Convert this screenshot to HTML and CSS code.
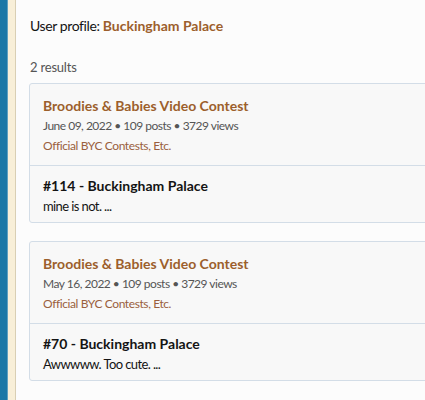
FILE: index.html
```html
<!DOCTYPE html>
<html lang="en">
<head>
    <meta charset="UTF-8">
    <meta name="viewport" content="width=device-width, initial-scale=1.0">
    <title>Search results</title>
    <link rel="stylesheet" href="styles.css">
</head>
<body>
    <div class="side-bar"></div>
    <div class="side-strip"></div>
    <div class="page">
        <h1 class="page-title">User profile: <a href="#">Buckingham Palace</a></h1>
        <p class="result-count">2 results</p>

        <div class="result">
            <div class="result-head">
                <a class="thread-title" href="#">Broodies &amp; Babies Video Contest</a>
                <div class="thread-meta">June 09, 2022 &bull; 109 posts &bull; 3729 views</div>
                <a class="forum-link" href="#">Official BYC Contests, Etc.</a>
            </div>
            <div class="result-body">
                <div class="post-title">#114 - Buckingham Palace</div>
                <div class="post-snippet">mine is not. ...</div>
            </div>
        </div>

        <div class="result">
            <div class="result-head">
                <a class="thread-title" href="#">Broodies &amp; Babies Video Contest</a>
                <div class="thread-meta">May 16, 2022 &bull; 109 posts &bull; 3729 views</div>
                <a class="forum-link" href="#">Official BYC Contests, Etc.</a>
            </div>
            <div class="result-body">
                <div class="post-title">#70 - Buckingham Palace</div>
                <div class="post-snippet">Awwwww. Too cute. ...</div>
            </div>
        </div>
    </div>
</body>
</html>
```

FILE: styles.css
```css
body {
    font-family: Lato, "Noto Sans", sans-serif;
    background-color: #fcfcfc;
    color: #141414;
    display: flex;
    margin: 0;
    min-height: 100vh;
    overflow: hidden;
}

a {
    text-decoration: none;
}

.side-bar {
    width: 7px;
    background-color: #1b78a6;
    border-right: 1px solid #5fa0c0;
    flex-shrink: 0;
}

.side-strip {
    width: 7px;
    background-color: #f8efd8;
    border-right: 1px solid #d9cfb4;
    flex-shrink: 0;
}

.page {
    flex: 1;
    padding: 17px 0 0 13px;
    margin-right: -20px;
}

.page-title {
    font-size: 14px;
    font-weight: normal;
    letter-spacing: -0.4px;
    line-height: 18px;
    margin: 0 0 23px 1px;
}

.page-title a {
    color: #9c5f2c;
    font-weight: bold;
    letter-spacing: 0;
}

.result-count {
    font-size: 13px;
    letter-spacing: -0.2px;
    line-height: 18px;
    color: #555;
    margin: 0 0 7px 1px;
}

.result {
    background-color: #f8f8f8;
    border: 1px solid #d3dde7;
    border-radius: 3px;
    margin-bottom: 18px;
}

.result-head {
    padding: 12px 13px 9px;
    border-bottom: 1px solid #d3dde7;
}

.thread-title {
    display: block;
    color: #9c5f2c;
    font-weight: bold;
    font-size: 14px;
    line-height: 20px;
}

.thread-meta {
    font-size: 12px;
    letter-spacing: -0.5px;
    color: #555;
    line-height: 20px;
}

.forum-link {
    display: block;
    font-size: 12px;
    letter-spacing: -0.4px;
    color: #9a5f3e;
    line-height: 20px;
}

.result-body {
    padding: 10px 13px 6px;
}

.post-title {
    font-weight: bold;
    font-size: 14px;
    line-height: 20px;
}

.post-snippet {
    font-size: 13px;
    letter-spacing: -0.6px;
    line-height: 20px;
}
```
